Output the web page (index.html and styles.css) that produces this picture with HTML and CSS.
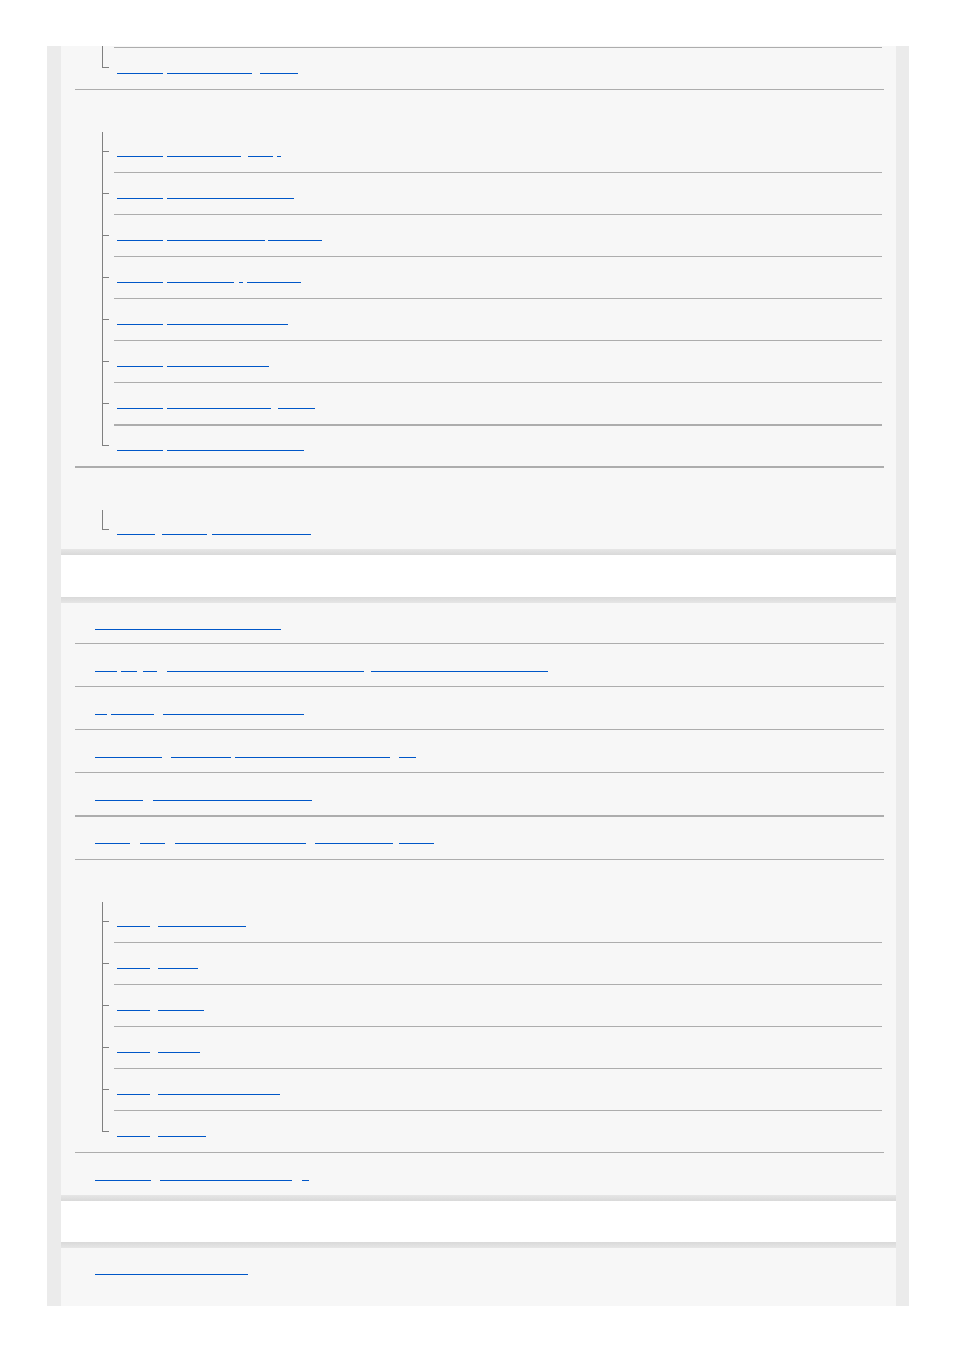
FILE: index.html
```html
<!DOCTYPE html>
<html lang="en">
<head>
    <meta charset="UTF-8">
    <meta name="viewport" content="width=device-width, initial-scale=1.0">
    <title>Help Guide</title>
    <link rel="stylesheet" href="styles.css">
</head>
<body>
    <div class="page">
        <div class="panel">
            <ul class="toc">
                <li class="item first cut">
                    <ul class="sub">
                        <li class="sub-item cut-row last">
                            <a class="link" href="#"><span class="seg w46"></span><span class="seg w85 m4"></span><span class="seg w38 m8"></span></a>
                        </li>
                    </ul>
                </li>
                <li class="item">
                    <div class="cat-title"></div>
                    <ul class="sub">
                        <li class="sub-item first">
                            <a class="link" href="#"><span class="seg w46"></span><span class="seg w74 m4"></span><span class="seg w25 m7"></span><span class="seg w4 m4"></span></a>
                        </li>
                        <li class="sub-item">
                            <a class="link" href="#"><span class="seg w46"></span><span class="seg w127 m4"></span></a>
                        </li>
                        <li class="sub-item">
                            <a class="link" href="#"><span class="seg w46"></span><span class="seg w98 m4"></span><span class="seg w54 m3"></span></a>
                        </li>
                        <li class="sub-item">
                            <a class="link" href="#"><span class="seg w46"></span><span class="seg w67 m4"></span><span class="seg w4 m5"></span><span class="seg w54 m4"></span></a>
                        </li>
                        <li class="sub-item">
                            <a class="link" href="#"><span class="seg w46"></span><span class="seg w121 m4"></span></a>
                        </li>
                        <li class="sub-item">
                            <a class="link" href="#"><span class="seg w46"></span><span class="seg w102 m4"></span></a>
                        </li>
                        <li class="sub-item">
                            <a class="link" href="#"><span class="seg w46"></span><span class="seg w104 m4"></span><span class="seg w37 m7"></span></a>
                        </li>
                        <li class="sub-item thick last">
                            <a class="link" href="#"><span class="seg w46"></span><span class="seg w137 m4"></span></a>
                        </li>
                    </ul>
                </li>
                <li class="item thick">
                    <div class="cat-title"></div>
                    <ul class="sub">
                        <li class="sub-item first last short">
                            <a class="link" href="#"><span class="seg w38"></span><span class="seg w45 m7"></span><span class="seg w99 m5"></span></a>
                        </li>
                    </ul>
                </li>
            </ul>
        </div>

        <div class="head"></div>

        <div class="panel">
            <ul class="toc">
                <li class="item first">
                    <a class="link" href="#"><span class="seg w186"></span></a>
                </li>
                <li class="item">
                    <a class="link" href="#"><span class="seg w22"></span><span class="seg w16 m4"></span><span class="seg w14 m6"></span><span class="seg w197 m10"></span><span class="seg w177 m7"></span></a>
                </li>
                <li class="item">
                    <a class="link" href="#"><span class="seg w12"></span><span class="seg w43 m4"></span><span class="seg w141 m9"></span></a>
                </li>
                <li class="item">
                    <a class="link" href="#"><span class="seg w67"></span><span class="seg w60 m9"></span><span class="seg w155 m4"></span><span class="seg w17 m9"></span></a>
                </li>
                <li class="item">
                    <a class="link" href="#"><span class="seg w48"></span><span class="seg w159 m10"></span></a>
                </li>
                <li class="item thick">
                    <a class="link" href="#"><span class="seg w35"></span><span class="seg w25 m10"></span><span class="seg w131 m10"></span><span class="seg w78 m9"></span><span class="seg w35 m6"></span></a>
                </li>
                <li class="item">
                    <div class="cat-title"></div>
                    <ul class="sub">
                        <li class="sub-item first">
                            <a class="link" href="#"><span class="seg w33"></span><span class="seg w88 m8"></span></a>
                        </li>
                        <li class="sub-item">
                            <a class="link" href="#"><span class="seg w33"></span><span class="seg w40 m8"></span></a>
                        </li>
                        <li class="sub-item">
                            <a class="link" href="#"><span class="seg w33"></span><span class="seg w46 m8"></span></a>
                        </li>
                        <li class="sub-item">
                            <a class="link" href="#"><span class="seg w33"></span><span class="seg w42 m8"></span></a>
                        </li>
                        <li class="sub-item">
                            <a class="link" href="#"><span class="seg w33"></span><span class="seg w122 m8"></span></a>
                        </li>
                        <li class="sub-item last">
                            <a class="link" href="#"><span class="seg w33"></span><span class="seg w48 m8"></span></a>
                        </li>
                    </ul>
                </li>
                <li class="item">
                    <a class="link" href="#"><span class="seg w56"></span><span class="seg w132 m9"></span><span class="seg w7 m10"></span></a>
                </li>
            </ul>
        </div>

        <div class="head head-narrow"></div>

        <div class="panel panel-end">
            <ul class="toc">
                <li class="item first">
                    <a class="link" href="#"><span class="seg w153"></span></a>
                </li>
            </ul>
        </div>
    </div>
</body>
</html>
```

FILE: styles.css
```css
body {
    margin: 0;
    background: #ffffff;
    font-family: "Liberation Sans", Arial, sans-serif;
}

.page {
    margin: 46px 45px 0 47px;
    padding: 0 13px 0 14px;
    background: #ebebeb;
}

.panel {
    background: #f7f7f7;
}

.panel-end {
    padding-bottom: 18px;
}

.head {
    height: 42px;
    padding: 6px 0;
    background:
        linear-gradient(#e6e6e6, #d9d9d9) top / 100% 6px no-repeat,
        linear-gradient(#d9d9d9, #e6e6e6) bottom / 100% 6px no-repeat,
        #ffffff;
}

.head-narrow {
    height: 41px;
}

/* top level list */
.toc {
    list-style: none;
    margin: 0 12px 0 14px;
    padding: 0;
}

.item {
    border-top: 1px solid #adadad;
}

.item.first {
    border-top: 0;
}

.item.thick {
    border-top-width: 2px;
}

.item.cut {
    padding-top: 1px;
}

.link {
    display: flex;
    align-items: flex-start;
    box-sizing: border-box;
    text-decoration: none;
}

.item > .link {
    height: 42px;
    padding: 27px 0 0 20px;
}

.item.first > .link {
    height: 40px;
    padding-top: 26px;
}

.item.thick > .link {
    padding-top: 26px;
}

.seg {
    display: block;
    flex: none;
    height: 1px;
    background: #0057c8;
}

.cat-title {
    height: 42px;
}

/* nested list with tree lines */
.sub {
    list-style: none;
    margin: 0 2px 0 39px;
    padding: 0;
}

.sub-item {
    position: relative;
    height: 41px;
    border-top: 1px solid #adadad;
}

.sub-item > .link {
    padding: 25px 0 0 3px;
}

.sub-item::before {
    content: "";
    position: absolute;
    left: -12px;
    top: -1px;
    bottom: 0;
    width: 1px;
    background: #808080;
}

.sub-item::after {
    content: "";
    position: absolute;
    left: -12px;
    top: 20px;
    width: 7px;
    height: 1px;
    background: #808080;
}

.sub-item.first {
    border-top: 0;
    margin-top: -1px;
}

.sub-item.first::before {
    top: 1px;
}

.sub-item.last::before {
    bottom: auto;
    height: 22px;
}

.sub-item.first.last::before {
    height: 20px;
}

.sub-item.short {
    height: 40px;
}

.sub-item.thick {
    height: 40px;
    border-top-width: 2px;
}

.sub-item.thick::before {
    top: -2px;
}

.sub-item.thick::after {
    top: 19px;
}

.sub-item.thick > .link {
    padding-top: 24px;
}

.sub-item.cut-row::before {
    top: -2px;
    height: 22px;
}

.sub-item.cut-row::after {
    top: 19px;
}

/* underline widths */
.w4 { width: 4px; }
.w7 { width: 7px; }
.w12 { width: 12px; }
.w14 { width: 14px; }
.w16 { width: 16px; }
.w17 { width: 17px; }
.w22 { width: 22px; }
.w25 { width: 25px; }
.w33 { width: 33px; }
.w35 { width: 35px; }
.w37 { width: 37px; }
.w38 { width: 38px; }
.w40 { width: 40px; }
.w42 { width: 42px; }
.w43 { width: 43px; }
.w45 { width: 45px; }
.w46 { width: 46px; }
.w48 { width: 48px; }
.w54 { width: 54px; }
.w56 { width: 56px; }
.w60 { width: 60px; }
.w67 { width: 67px; }
.w74 { width: 74px; }
.w78 { width: 78px; }
.w85 { width: 85px; }
.w88 { width: 88px; }
.w98 { width: 98px; }
.w99 { width: 99px; }
.w102 { width: 102px; }
.w104 { width: 104px; }
.w121 { width: 121px; }
.w122 { width: 122px; }
.w127 { width: 127px; }
.w131 { width: 131px; }
.w132 { width: 132px; }
.w137 { width: 137px; }
.w141 { width: 141px; }
.w153 { width: 153px; }
.w155 { width: 155px; }
.w159 { width: 159px; }
.w177 { width: 177px; }
.w186 { width: 186px; }
.w197 { width: 197px; }

/* gaps between underline runs */
.m3 { margin-left: 3px; }
.m4 { margin-left: 4px; }
.m5 { margin-left: 5px; }
.m6 { margin-left: 6px; }
.m7 { margin-left: 7px; }
.m8 { margin-left: 8px; }
.m9 { margin-left: 9px; }
.m10 { margin-left: 10px; }
```
